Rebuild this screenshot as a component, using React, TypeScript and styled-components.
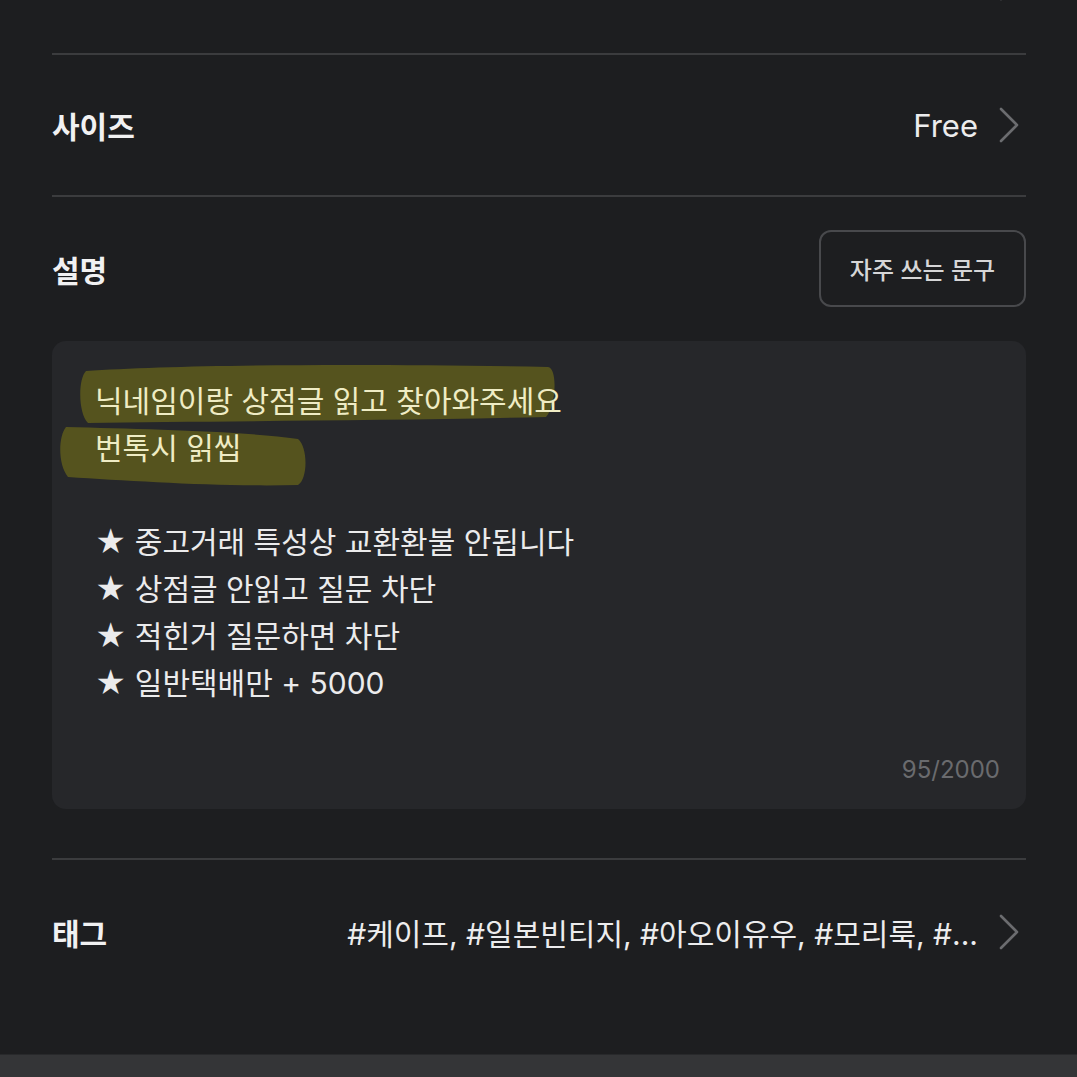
import * as React from 'react';
import styled, { createGlobalStyle } from 'styled-components';

const GlobalStyle = createGlobalStyle`
  html, body {
    margin: 0;
    padding: 0;
    background: #1d1e20;
    overflow: hidden;
  }
  body {
    font-family: Inter, "Noto Sans CJK KR", sans-serif;
    color: #ececed;
  }
`;

const Page = styled.div`
  width: 1077px;
  height: 1077px;
  display: flex;
  flex-direction: column;
  overflow: hidden;
  background: #1d1e20;
`;

const Scroll = styled.div`
  flex: 1;
  display: flex;
  flex-direction: column;
  padding: 0 51px 0 52px;
  margin-top: -88px;
`;

const Divider = styled.div`
  height: 2px;
  background: #3b3c3e;
  flex-shrink: 0;
`;

const Row = styled.div<{ $h: number }>`
  height: ${(p) => p.$h}px;
  display: flex;
  align-items: center;
  justify-content: space-between;
`;

const Label = styled.div`
  font-size: 30px;
  font-weight: 700;
  color: #f1f1f2;
`;

const Value = styled.div`
  display: flex;
  align-items: center;
  gap: 21px;
  padding-right: 7px;
  font-size: 31px;
  color: #ececed;
`;

const Section = styled.div`
  display: flex;
  flex-direction: column;
  padding: 33px 0 49px;
  gap: 34px;
`;

const SectionHead = styled.div`
  display: flex;
  align-items: center;
  justify-content: space-between;
`;

const PhraseButton = styled.button`
  width: 207px;
  height: 77px;
  border: 2px solid #48494c;
  border-radius: 12px;
  background: transparent;
  color: #d6d6d7;
  font-family: inherit;
  font-size: 24px;
  font-weight: 500;
`;

const TextBox = styled.div`
  position: relative;
  height: 468px;
  box-sizing: border-box;
  background: #26272a;
  border-radius: 14px;
  padding: 37px 26px 24px 43px;
  display: flex;
  flex-direction: column;
`;

const Marker = styled.svg`
  position: absolute;
  left: 0;
  top: 0;
  width: 100%;
  height: 100%;
  pointer-events: none;
`;

const Body = styled.div`
  position: relative;
  flex: 1;
  font-size: 30px;
  line-height: 47px;
  color: #ebebec;
  white-space: pre;
`;

const Line = styled.div<{ $marked?: boolean }>`
  height: 47px;
  color: ${(p) => (p.$marked ? '#efecc4' : '#ebebec')};
`;

const Counter = styled.div`
  position: relative;
  align-self: flex-end;
  font-size: 24px;
  line-height: 30px;
  color: #6a6b6e;
`;

const Tags = styled.div`
  font-size: 30px;
  color: #ececed;
`;

const BottomBar = styled.div`
  height: 22px;
  flex-shrink: 0;
  background: #343537;
  border-top: 1px solid #28292b;
`;

const Chevron = () => (
  <svg width="20" height="36" viewBox="0 0 20 36">
    <polyline points="2,2 18,18 2,34" fill="none" stroke="#6b6c6f" strokeWidth="2.6" strokeLinecap="round" strokeLinejoin="round" />
  </svg>
);

const lines: { text: string; marked?: boolean }[] = [
  { text: '닉네임이랑 상점글 읽고 찾아와주세요', marked: true },
  { text: '번톡시 읽씹', marked: true },
  { text: ' ' },
  { text: '★ 중고거래 특성상 교환환불 안됩니다' },
  { text: '★ 상점글 안읽고 질문 차단' },
  { text: '★ 적힌거 질문하면 차단' },
  { text: '★ 일반택배만 + 5000' },
];

export default function App() {
  return (
    <Page>
      <GlobalStyle />
      <Scroll>
        <Row $h={141}>
          <Label />
          <Value>
            <Chevron />
          </Value>
        </Row>
        <Divider />
        <Row $h={140}>
          <Label>사이즈</Label>
          <Value>
            Free
            <Chevron />
          </Value>
        </Row>
        <Divider />
        <Section>
          <SectionHead>
            <Label>설명</Label>
            <PhraseButton>자주 쓰는 문구</PhraseButton>
          </SectionHead>
          <TextBox>
            <Marker viewBox="0 0 974 468">
              <path
                d="M34 30 C 120 24, 300 22, 496 26 C 506 27, 504 66, 494 76 C 330 80, 150 80, 36 82 C 26 72, 26 38, 34 30 Z"
                fill="#55531e"
              />
              <path
                d="M14 86 C 90 88, 190 90, 246 98 C 256 106, 256 138, 246 144 C 170 146, 80 140, 16 136 C 6 124, 6 96, 14 86 Z"
                fill="#55531e"
              />
            </Marker>
            <Body>
              {lines.map((l, i) => (
                <Line key={i} $marked={l.marked}>
                  {l.text}
                </Line>
              ))}
            </Body>
            <Counter>95/2000</Counter>
          </TextBox>
        </Section>
        <Divider />
        <Row $h={144}>
          <Label>태그</Label>
          <Value>
            <Tags>#케이프, #일본빈티지, #아오이유우, #모리룩, #...</Tags>
            <Chevron />
          </Value>
        </Row>
      </Scroll>
      <BottomBar />
    </Page>
  );
}
